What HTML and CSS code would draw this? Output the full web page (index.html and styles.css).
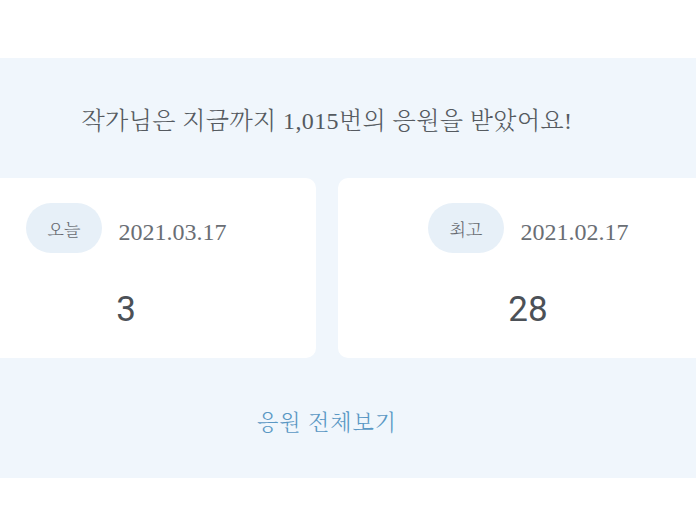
FILE: index.html
```html
<!DOCTYPE html>
<html lang="ko">
<head>
<meta charset="utf-8">
<title>응원</title>
<link rel="stylesheet" href="styles.css">
</head>
<body>
<div class="top"></div>
<section class="panel">
  <div class="inner">
    <h2 class="headline">작가님은 지금까지 1,015번의 응원을 받았어요!</h2>
    <div class="cards">
      <div class="card">
        <div class="meta">
          <span class="badge">오늘</span>
          <span class="date">2021.03.17</span>
        </div>
        <div class="count">3</div>
      </div>
      <div class="card">
        <div class="meta">
          <span class="badge">최고</span>
          <span class="date">2021.02.17</span>
        </div>
        <div class="count">28</div>
      </div>
    </div>
    <a class="more" href="#">응원 전체보기</a>
  </div>
</section>
</body>
</html>
```
FILE: styles.css
```css
html, body {
  margin: 0;
  padding: 0;
  background: #ffffff;
}
body {
  font-family: "Liberation Serif", "Noto Serif CJK KR", "Noto Sans CJK KR", serif;
  overflow: hidden;
}
.top {
  height: 58px;
}
.panel {
  background: #f0f6fc;
  height: 420px;
  overflow: hidden;
}
.inner {
  width: 782px;
  margin-left: -64px;
  display: flex;
  flex-direction: column;
  align-items: center;
}
.headline {
  margin: 45px 0 0;
  font-size: 24px;
  line-height: 36px;
  font-weight: 300;
  color: #555a60;
  letter-spacing: 0.4px;
}
.cards {
  margin-top: 39px;
  display: grid;
  grid-template-columns: 380px 380px;
  gap: 22px;
}
.card {
  background: #ffffff;
  border-radius: 10px;
  height: 180px;
  box-sizing: border-box;
  padding-top: 25px;
  display: flex;
  flex-direction: column;
  align-items: center;
}
.meta {
  display: flex;
  align-items: center;
  gap: 16px;
}
.badge {
  height: 50px;
  padding: 0 22px;
  border-radius: 25px;
  background: #e7f0f8;
  color: #666a70;
  font-size: 17px;
  font-weight: 300;
  display: flex;
  align-items: center;
}
.date {
  padding-top: 9px;
  font-size: 24px;
  color: #6a6e74;
}
.count {
  margin-top: 39px;
  font-family: Roboto, "Noto Sans", sans-serif;
  font-size: 35px;
  line-height: 36px;
  color: #4c5157;
}
.more {
  margin-top: 48px;
  font-size: 22px;
  line-height: 33px;
  font-weight: 300;
  color: #5a98c4;
  letter-spacing: 1px;
  text-decoration: none;
}
```
